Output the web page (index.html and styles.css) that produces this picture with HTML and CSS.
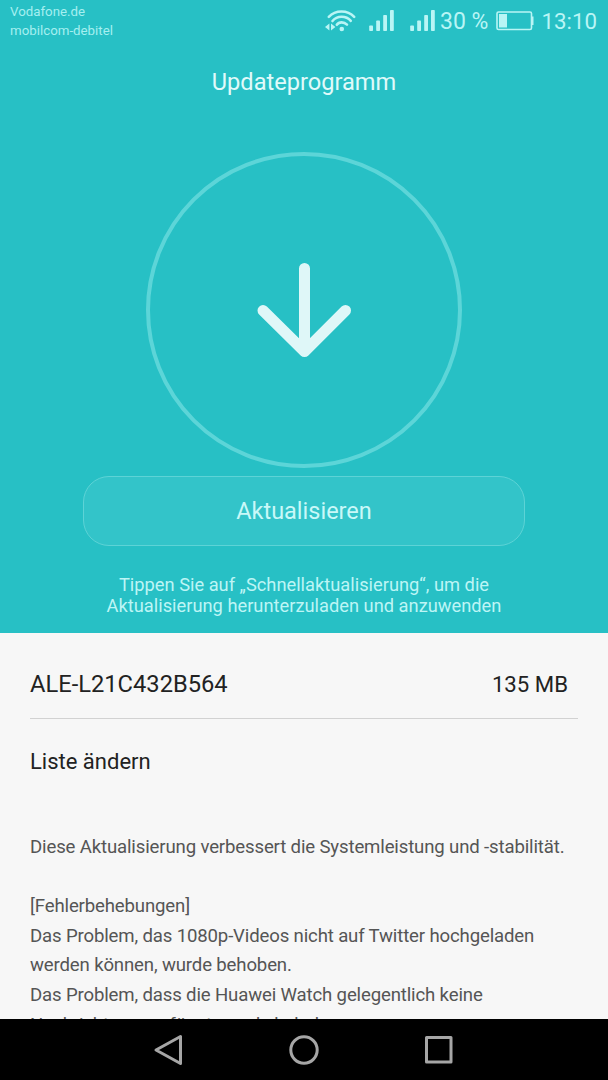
FILE: index.html
```html
<!DOCTYPE html>
<html lang="de">
<head>
    <meta charset="UTF-8">
    <meta name="viewport" content="width=device-width, initial-scale=1.0">
    <title>Updateprogramm</title>
    <link rel="stylesheet" href="styles.css">
</head>
<body>
    <div class="screen">
        <header class="update-panel">
            <div class="status-bar">
                <div class="carriers">
                    <div>Vodafone.de</div>
                    <div>mobilcom-debitel</div>
                </div>
                <div class="status-icons">
                    <svg class="wifi" width="32" height="24" viewBox="0 0 32 24" fill="none" stroke="currentColor" stroke-width="2.6" stroke-linecap="round">
                        <path d="M3.8 7.8C10.5 0.8 22.5 0.8 29.2 7.8"/>
                        <path d="M7.5 12C12 6.4 21 6.4 25.8 11.8"/>
                        <path d="M11.8 15.8C14 12.6 19 12.6 22 15.6"/>
                        <circle cx="16.8" cy="20" r="2.3" fill="currentColor" stroke="none"/>
                        <path d="M4.4 14.5v7L0 18zM6 14.5v7L10.4 18z" fill="currentColor" stroke="none"/>
                    </svg>
                    <svg class="signal" width="26" height="22" viewBox="0 0 26 22" fill="currentColor">
                        <rect x="0.2" y="15.5" width="3.8" height="5.5" rx="0.8"/>
                        <rect x="7.2" y="10.5" width="3.8" height="10.5" rx="0.8"/>
                        <rect x="14.2" y="5" width="3.8" height="16" rx="0.8"/>
                        <rect x="21" y="0" width="3.8" height="21" rx="0.8"/>
                    </svg>
                    <svg class="signal signal-2" width="26" height="22" viewBox="0 0 26 22" fill="currentColor">
                        <rect x="0.2" y="15.5" width="3.8" height="5.5" rx="0.8"/>
                        <rect x="7.2" y="10.5" width="3.8" height="10.5" rx="0.8"/>
                        <rect x="14.2" y="5" width="3.8" height="16" rx="0.8"/>
                        <rect x="21" y="0" width="3.8" height="21" rx="0.8"/>
                    </svg>
                    <span class="percent">30 %</span>
                    <svg class="battery" width="38" height="20" viewBox="0 0 38 20">
                        <rect x="1" y="1" width="34.5" height="17.5" rx="1.5" fill="none" stroke="currentColor" stroke-width="1.6"/>
                        <rect x="3" y="3" width="8" height="13.5" fill="currentColor"/>
                        <path d="M35.5 5.5h2v8.5h-2z" fill="currentColor"/>
                    </svg>
                    <span class="clock">13:10</span>
                </div>
            </div>

            <h1>Updateprogramm</h1>

            <div class="progress-ring">
                <svg width="96" height="96" viewBox="0 0 96 96" fill="none" stroke="currentColor" stroke-width="11" stroke-linecap="round" stroke-linejoin="round">
                    <path d="M48.5 6.5v82M7 48.5L48.5 89.5l41-41"/>
                </svg>
            </div>

            <button class="update-button">Aktualisieren</button>

            <p class="hint">Tippen Sie auf „Schnellaktualisierung“, um die<br>Aktualisierung herunterzuladen und anzuwenden</p>
        </header>

        <main class="details">
            <div class="version">
                <span class="version-name">ALE-L21C432B564</span>
                <span class="version-size">135 MB</span>
            </div>
            <h2>Liste ändern</h2>
            <div class="changelog">
                <p>Diese Aktualisierung verbessert die Systemleistung und -stabilität.</p>
                <p>[Fehlerbehebungen]<br>
                Das Problem, das 1080p-Videos nicht auf Twitter hochgeladen<br>
                werden können, wurde behoben.<br>
                Das Problem, dass die Huawei Watch gelegentlich keine<br>
                Nachrichten empfängt, wurde behoben.</p>
            </div>
        </main>

        <nav class="nav-bar">
            <svg width="32" height="34" viewBox="0 0 32 34" fill="none" stroke="currentColor" stroke-width="3" stroke-linejoin="round">
                <path d="M27.5 3.5v27L3 17z"/>
            </svg>
            <svg width="32" height="34" viewBox="0 0 32 34" fill="none" stroke="currentColor" stroke-width="3">
                <circle cx="16" cy="17" r="13.2"/>
            </svg>
            <svg width="32" height="34" viewBox="0 0 32 34" fill="none" stroke="currentColor" stroke-width="3" stroke-linejoin="round">
                <rect x="3.5" y="4.5" width="24.5" height="24.5"/>
            </svg>
        </nav>
    </div>
</body>
</html>
```

FILE: styles.css
```css
* {
    box-sizing: border-box;
}

body {
    margin: 0;
    font-family: Roboto, "Liberation Sans", sans-serif;
    background-color: #f7f7f7;
}

h1, h2, p {
    margin: 0;
    font-weight: 400;
}

svg {
    display: block;
    flex: none;
}

.screen {
    display: flex;
    flex-direction: column;
    width: 608px;
    height: 1080px;
    overflow: hidden;
}

.update-panel {
    display: flex;
    flex-direction: column;
    align-items: center;
    flex: none;
    height: 633px;
    background-color: #27c0c5;
    color: #e0fafa;
}

/* Statusleiste */
.status-bar {
    display: flex;
    justify-content: space-between;
    width: 100%;
    height: 42px;
    padding: 2px 11px 0 10px;
    color: #b9f5f5;
}

.carriers {
    padding-top: 1px;
    font-size: 13.3px;
    line-height: 18.5px;
    color: #a5eff0;
}

.status-icons {
    display: flex;
    align-items: center;
    height: 38px;
    font-size: 23px;
}

.signal {
    margin-left: 12px;
}

.signal-2 {
    margin-left: 15px;
}

.percent {
    margin-left: 4px;
}

.battery {
    margin-left: 8px;
}

.clock {
    margin-left: 7px;
    font-size: 22.3px;
}

h1 {
    margin-top: 26px;
    font-size: 23.6px;
    line-height: 28px;
}

.progress-ring {
    display: flex;
    align-items: center;
    justify-content: center;
    flex: none;
    width: 316px;
    height: 316px;
    margin-top: 56px;
    border: 4px solid #5cd5d8;
    border-radius: 50%;
    color: #dff7f8;
}

.update-button {
    flex: none;
    width: 442px;
    height: 70px;
    margin-top: 8px;
    padding: 0;
    border: 1px solid #5dd3d6;
    border-radius: 26px;
    background-color: #33c4c9;
    color: #c9f8f8;
    font: inherit;
    font-size: 23.5px;
}

.hint {
    margin-top: 28px;
    font-size: 18.3px;
    line-height: 21px;
    text-align: center;
    color: #bdf5f5;
}

/* Versionsdetails */
.details {
    flex: 1;
    min-height: 0;
    padding: 0 30px;
    overflow: hidden;
    color: #222;
}

.version {
    display: flex;
    align-items: center;
    justify-content: space-between;
    height: 86px;
    padding: 17px 10px 0 0;
    border-bottom: 1px solid #d2d2d2;
}

.version-name {
    font-size: 23.7px;
}

.version-size {
    font-size: 22.2px;
}

h2 {
    margin-top: 29px;
    font-size: 22px;
    line-height: 28px;
}

.changelog {
    margin-top: 57px;
    font-size: 18.6px;
    line-height: 29.6px;
    letter-spacing: -0.15px;
    color: #555;
    white-space: nowrap;
}

.changelog p + p {
    margin-top: 29.6px;
}

.nav-bar {
    display: flex;
    justify-content: center;
    align-items: center;
    gap: 103px;
    flex: none;
    height: 61px;
    background-color: #000;
    color: #a6a6a6;
}
```
